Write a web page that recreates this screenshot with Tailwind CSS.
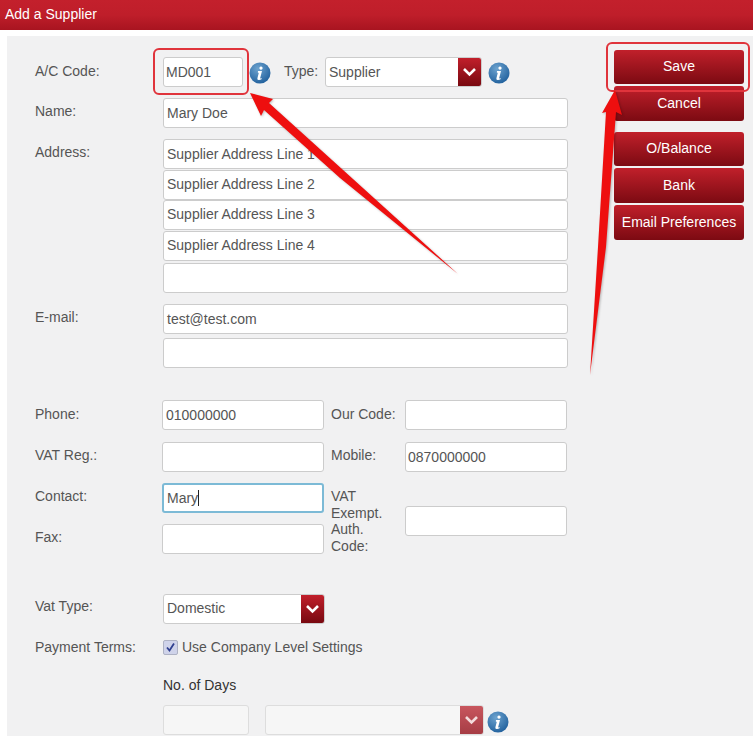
<!DOCTYPE html>
<html>
<head>
<meta charset="utf-8">
<script src="https://cdn.jsdelivr.net/npm/@tailwindcss/browser@4"></script>
</head>
<body class="bg-white">
<div class="relative w-[753px] h-[736px] overflow-hidden bg-white font-['Liberation_Sans',Arial,sans-serif] text-[14px] text-[#555]">
  <div class="h-[30px] pl-[5px] leading-[29px] text-[14px] text-white bg-gradient-to-b from-[#c3202c] via-[#bf1e2a] to-[#a81420]">Add a Supplier</div>
  <div class="ml-[7px] mt-[6px] h-[700px] bg-[#f1f1f2] flex">
    <div class="w-[607px] pl-[28px] pt-[21px] shrink-0">
      <div class="flex h-[30px]">
        <div class="w-[128px] pt-[4px]">A/C Code:</div>
        <div class="w-[80px] h-[30px] bg-white border border-[#ccc] rounded-[3px] pl-[2px] leading-[29px]">MD001</div>
        <svg class="ml-[6px] mt-[5px] shrink-0" width="22" height="22" viewBox="0 0 22 22"><defs><radialGradient id="i1" cx="40%" cy="30%" r="75%"><stop offset="0" stop-color="#6da3cf"/><stop offset="1" stop-color="#1f5f9c"/></radialGradient></defs><circle cx="11" cy="11" r="10.5" fill="url(#i1)"/><path d="M12 4.5a1.6 1.6 0 1 1-.01 0M9 9h4l-1.8 7q-.1.6.5.5l1-.4-.2 1.2q-1.6.9-3 .7-1.5-.3-1.1-1.8l1.3-5q.1-.7-.9-.7z" fill="#fff"/></svg>
        <div class="ml-[13px] w-[41px] pt-[4px]">Type:</div>
        <div class="w-[157px] h-[30px] bg-white border border-[#ccc] rounded-[3px] pl-[3px] leading-[29px] relative overflow-hidden">Supplier
          <div class="absolute right-0 -top-px h-[30px] w-[23px] bg-gradient-to-b from-[#c4202c] to-[#76080f] flex items-center justify-center"><svg width="15" height="10" viewBox="0 0 15 10"><path d="M2 2l5.5 5.5L13 2" fill="none" stroke="#fff" stroke-width="2.6"/></svg></div>
        </div>
        <svg class="ml-[6px] mt-[5px] shrink-0" width="22" height="22" viewBox="0 0 22 22"><circle cx="11" cy="11" r="10.5" fill="url(#i1)"/><path d="M12 4.5a1.6 1.6 0 1 1-.01 0M9 9h4l-1.8 7q-.1.6.5.5l1-.4-.2 1.2q-1.6.9-3 .7-1.5-.3-1.1-1.8l1.3-5q.1-.7-.9-.7z" fill="#fff"/></svg>
      </div>
      <div class="flex mt-[11px]">
        <div class="w-[128px] pt-[3px]">Name:</div>
        <div class="w-[405px] h-[30px] bg-white border border-[#ccc] rounded-[3px] pl-[3px] leading-[29px]">Mary Doe</div>
      </div>
      <div class="flex mt-[11px]">
        <div class="w-[128px] pt-[3px]">Address:</div>
        <div class="w-[405px] flex flex-col">
          <div class="h-[30px] bg-white border border-[#ccc] rounded-[3px] pl-[3px] leading-[29px]">Supplier Address Line 1</div>
          <div class="h-[30px] mt-[0.5px] bg-white border border-[#ccc] rounded-[3px] pl-[3px] leading-[27px]">Supplier Address Line 2</div>
          <div class="h-[30px] mt-[0.5px] bg-white border border-[#ccc] rounded-[3px] pl-[3px] leading-[27px]">Supplier Address Line 3</div>
          <div class="h-[30px] mt-[0.5px] bg-white border border-[#ccc] rounded-[3px] pl-[3px] leading-[27px]">Supplier Address Line 4</div>
          <div class="h-[30px] mt-[2.5px] bg-white border border-[#ccc] rounded-[3px]"></div>
        </div>
      </div>
      <div class="flex mt-[11px]">
        <div class="w-[128px] pt-[3px]">E-mail:</div>
        <div class="w-[405px] flex flex-col gap-[4px]">
          <div class="h-[30px] bg-white border border-[#ccc] rounded-[3px] pl-[3px] leading-[29px]">test@test.com</div>
          <div class="h-[30px] bg-white border border-[#ccc] rounded-[3px]"></div>
        </div>
      </div>
      <div class="flex mt-[32px]">
        <div class="w-[127px] pt-[4px]">Phone:</div>
        <div class="w-[162px] h-[30px] bg-white border border-[#ccc] rounded-[3px] pl-[3px] leading-[29px]">010000000</div>
        <div class="w-[74px] ml-[7px] pt-[4px]">Our Code:</div>
        <div class="w-[162px] h-[30px] bg-white border border-[#ccc] rounded-[3px]"></div>
      </div>
      <div class="flex mt-[12px]">
        <div class="w-[127px] pt-[3px]">VAT Reg.:</div>
        <div class="w-[162px] h-[30px] bg-white border border-[#ccc] rounded-[3px]"></div>
        <div class="w-[74px] ml-[7px] pt-[3px]">Mobile:</div>
        <div class="w-[162px] h-[30px] bg-white border border-[#ccc] rounded-[3px] pl-[2px] leading-[29px]">0870000000</div>
      </div>
      <div class="flex mt-[11px]">
        <div class="w-[127px] flex flex-col">
          <div class="h-[41px] pt-[3px]">Contact:</div>
          <div class="pt-[3px]">Fax:</div>
        </div>
        <div class="w-[162px] flex flex-col gap-[11px]">
          <div class="h-[30px] bg-white border-2 border-[#7cbad6] rounded-[3px] pl-[3px] leading-[26px] flex items-center">Mary<span class="w-px h-[16px] bg-[#222]"></span></div>
          <div class="h-[30px] bg-white border border-[#ccc] rounded-[3px]"></div>
        </div>
        <div class="w-[74px] ml-[7px] pt-[5px] leading-[16.5px]">VAT<br>Exempt.<br>Auth.<br>Code:</div>
        <div class="w-[162px] h-[30px] mt-[23px] bg-white border border-[#ccc] rounded-[3px]"></div>
      </div>
      <div class="flex mt-[40px]">
        <div class="w-[128px] pt-[2px]">Vat Type:</div>
        <div class="w-[162px] h-[30px] bg-white border border-[#ccc] rounded-[3px] pl-[3px] leading-[27px] relative overflow-hidden">Domestic
          <div class="absolute right-0 -top-px h-[30px] w-[23px] bg-gradient-to-b from-[#c4202c] to-[#76080f] flex items-center justify-center"><svg width="15" height="10" viewBox="0 0 15 10"><path d="M2 2l5.5 5.5L13 2" fill="none" stroke="#fff" stroke-width="2.6"/></svg></div>
        </div>
      </div>
      <div class="flex mt-[15px] items-center h-[16px]">
        <div class="w-[128px]">Payment Terms:</div>
        <div class="w-[15px] h-[15px] bg-[#cfd3ea] border border-[#aeb2c4] rounded-[2px] flex items-center justify-center"><svg width="11" height="11" viewBox="0 0 11 11"><path d="M2 5.5l2.5 3L9 1.5" fill="none" stroke="#2f3f8f" stroke-width="1.8"/></svg></div>
        <div class="ml-[4px]">Use Company Level Settings</div>
      </div>
      <div class="ml-[128px] mt-[22px] h-[16px] leading-[16px] text-[#333]">No. of Days</div>
      <div class="ml-[128px] mt-[12px] flex">
        <div class="w-[86px] h-[30px] bg-[#f6f6f6] border border-[#ddd] rounded-[3px]"></div>
        <div class="ml-[16px] w-[219px] h-[30px] bg-[#f6f6f6] border border-[#ddd] rounded-[3px] relative overflow-hidden">
          <div class="absolute right-0 -top-px h-[30px] w-[23px] bg-gradient-to-b from-[#c9575f] to-[#a53c44] flex items-center justify-center"><svg width="15" height="10" viewBox="0 0 15 10"><path d="M2 2l5.5 5.5L13 2" fill="none" stroke="#f3dcdc" stroke-width="2.6"/></svg></div>
        </div>
        <svg class="ml-[3px] mt-[6px] shrink-0" width="22" height="22" viewBox="0 0 22 22"><circle cx="11" cy="11" r="10.5" fill="url(#i1)"/><path d="M12 4.5a1.6 1.6 0 1 1-.01 0M9 9h4l-1.8 7q-.1.6.5.5l1-.4-.2 1.2q-1.6.9-3 .7-1.5-.3-1.1-1.8l1.3-5q.1-.7-.9-.7z" fill="#fff"/></svg>
      </div>
    </div>
    <div class="w-[130px] pt-[14px] flex flex-col text-white text-center text-[14px]">
      <div class="h-[34px] leading-[32px] rounded-[3px] bg-gradient-to-b from-[#c1202b] to-[#7c0a12]">Save</div>
      <div class="h-[35px] mt-[2px] leading-[34px] rounded-[3px] bg-gradient-to-b from-[#c1202b] to-[#7c0a12]">Cancel</div>
      <div class="h-[34px] mt-[11px] leading-[32px] rounded-[3px] bg-gradient-to-b from-[#c1202b] to-[#7c0a12]">O/Balance</div>
      <div class="h-[35px] mt-[2px] leading-[34px] rounded-[3px] bg-gradient-to-b from-[#c1202b] to-[#7c0a12]">Bank</div>
      <div class="h-[35px] mt-[2px] leading-[34px] rounded-[3px] bg-gradient-to-b from-[#c1202b] to-[#7c0a12]">Email Preferences</div>
    </div>
  </div>
  <div class="absolute left-[153px] top-[48px] w-[96px] h-[47px] border-2 border-[#e0343c] rounded-[6px]"></div>
  <div class="absolute left-[606px] top-[42px] w-[144px] h-[50px] border-2 border-[#e0343c] rounded-[6px]"></div>
  <svg class="absolute left-0 top-0 pointer-events-none drop-shadow-[1px_1px_1px_rgba(0,0,0,0.25)]" width="753" height="736" viewBox="0 0 753 736">
    <polygon points="250,93 273,99 269,103 458,274 340,178 264,110 261,116" fill="#ee0f0f"/>
    <polygon points="615,90 622,115 616,112 606,247 590,375 598,247 606,112 602,113" fill="#ee0f0f"/>
  </svg>
</div>
</body>
</html>
